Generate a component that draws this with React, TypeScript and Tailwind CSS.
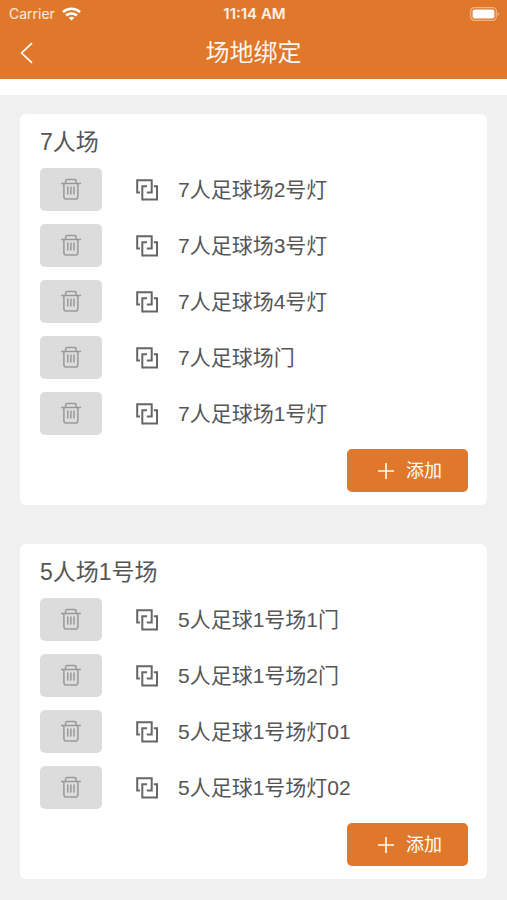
type Venue = {
  name: string;
  devices: string[];
};

const VENUES: Venue[] = [
  {
    name: "7人场",
    devices: ["7人足球场2号灯", "7人足球场3号灯", "7人足球场4号灯", "7人足球场门", "7人足球场1号灯"],
  },
  {
    name: "5人场1号场",
    devices: ["5人足球1号场1门", "5人足球1号场2门", "5人足球1号场灯01", "5人足球1号场灯02"],
  },
];

export default function App() {
  return (
    <div className="flex min-h-screen flex-col bg-[#f0f0f0] font-['Liberation_Sans','Noto_Sans_CJK_SC',sans-serif] text-[#555]">
      <header className="border-b-16 border-white bg-[#e0782b] text-white">
        <StatusBar />
        <div className="grid h-[52px] grid-cols-[1fr_auto_1fr] items-center px-5">
          <button type="button" aria-label="返回" className="w-fit">
            <BackIcon />
          </button>
          <h1 className="text-[24px] leading-8 text-white/95">场地绑定</h1>
        </div>
      </header>

      <main className="flex flex-col gap-[39px] px-5 pt-[19px] pb-5">
        {VENUES.map((v) => (
          <VenueCard key={v.name} {...v} />
        ))}
      </main>
    </div>
  );
}

function StatusBar() {
  return (
    <div className="grid h-[27px] grid-cols-3 items-center pr-[7px] pl-[9px] font-['Inter','Noto_Sans_CJK_SC',sans-serif] text-[14px] leading-4">
      <div className="flex items-center gap-[7px] text-white/85">
        <span>Carrier</span>
        <WifiIcon />
      </div>
      <span className="text-center text-[15px] font-semibold text-white/90">11:14 AM</span>
      <div className="flex justify-end">
        <BatteryIcon />
      </div>
    </div>
  );
}

function VenueCard({ name, devices }: Venue) {
  return (
    <section className="rounded-md bg-white pt-3 pr-[19px] pb-[13px] pl-5">
      <h2 className="mb-[10px] text-[23px] leading-8">{name}</h2>
      <ul className="flex flex-col gap-[13px]">
        {devices.map((d) => (
          <li key={d} className="flex items-center">
            <button
              type="button"
              aria-label={`删除 ${d}`}
              className="flex h-[43px] w-[62px] items-center justify-center rounded-[5px] bg-[#dcdcdc] pb-0.5 text-[#999]"
            >
              <TrashIcon />
            </button>
            <span className="ml-[33px] text-[#666]">
              <LinkedIcon />
            </span>
            <span className="ml-[19px] text-[21px] leading-8">{d}</span>
          </li>
        ))}
      </ul>
      <div className="mt-[14px] flex justify-end">
        <button
          type="button"
          className="flex h-[43px] items-center gap-3 rounded-[5px] bg-[#e0782b] pr-[26px] pl-[31px] text-[18px] text-white"
        >
          <PlusIcon />
          <span className="pt-0.5">添加</span>
        </button>
      </div>
    </section>
  );
}

function BackIcon() {
  return (
    <svg width="14" height="22" viewBox="0 0 14 22" fill="none" stroke="currentColor" strokeWidth="1.7">
      <path d="M12 1.2 1.6 11 12 20.8" />
    </svg>
  );
}

function WifiIcon() {
  return (
    <svg width="19" height="14" viewBox="0 0 19 14" fill="none" stroke="white" strokeWidth="2.5">
      <path d="M1 5.1C5.7.7 13.3.7 18 5.1" />
      <path d="M4.1 8.5C7.1 5.7 11.9 5.7 14.9 8.5" />
      <path d="M9.5 13.6 6.7 10.8C8.3 9.4 10.7 9.4 12.3 10.8Z" fill="white" stroke="none" />
    </svg>
  );
}

function BatteryIcon() {
  return (
    <svg width="30" height="14" viewBox="0 0 30 14">
      <rect x="0.7" y="0.7" width="25.6" height="12.6" rx="3.6" fill="none" stroke="white" strokeOpacity="0.45" strokeWidth="1.2" />
      <rect x="2.6" y="2.6" width="21.8" height="8.8" rx="2" fill="white" />
      <path d="M27.6 5c1.9.7 1.9 3.3 0 4Z" fill="white" fillOpacity="0.45" />
    </svg>
  );
}

function TrashIcon() {
  return (
    <svg width="22" height="22" viewBox="0 0 22 22" fill="none" stroke="currentColor" strokeWidth="1.5">
      <path d="M1 5.5h20" />
      <path d="M5.6 5.5V3.3Q5.6 1.6 7.3 1.6h7.2q1.7 0 1.7 1.7v2.2" />
      <path d="M3.9 5.5v13.3q0 2.1 2.1 2.1h9.8q2.1 0 2.1-2.1V5.5" />
      <path d="M7.8 8.6v8M10.9 8.6v8M14 8.6v8" />
    </svg>
  );
}

function LinkedIcon() {
  return (
    <svg width="24" height="24" viewBox="0 0 24 24" fill="none" stroke="currentColor" strokeWidth="2">
      <path d="M5 14.5H2.2V2.2H16.7v12.3h-4.9" />
      <path d="M12 8.2H7.3v13.2H22V8.2h-3.2" />
    </svg>
  );
}

function PlusIcon() {
  return (
    <svg width="16" height="16" viewBox="0 0 16 16" stroke="currentColor" strokeWidth="1.6">
      <path d="M0 8h16M8 0v16" />
    </svg>
  );
}
